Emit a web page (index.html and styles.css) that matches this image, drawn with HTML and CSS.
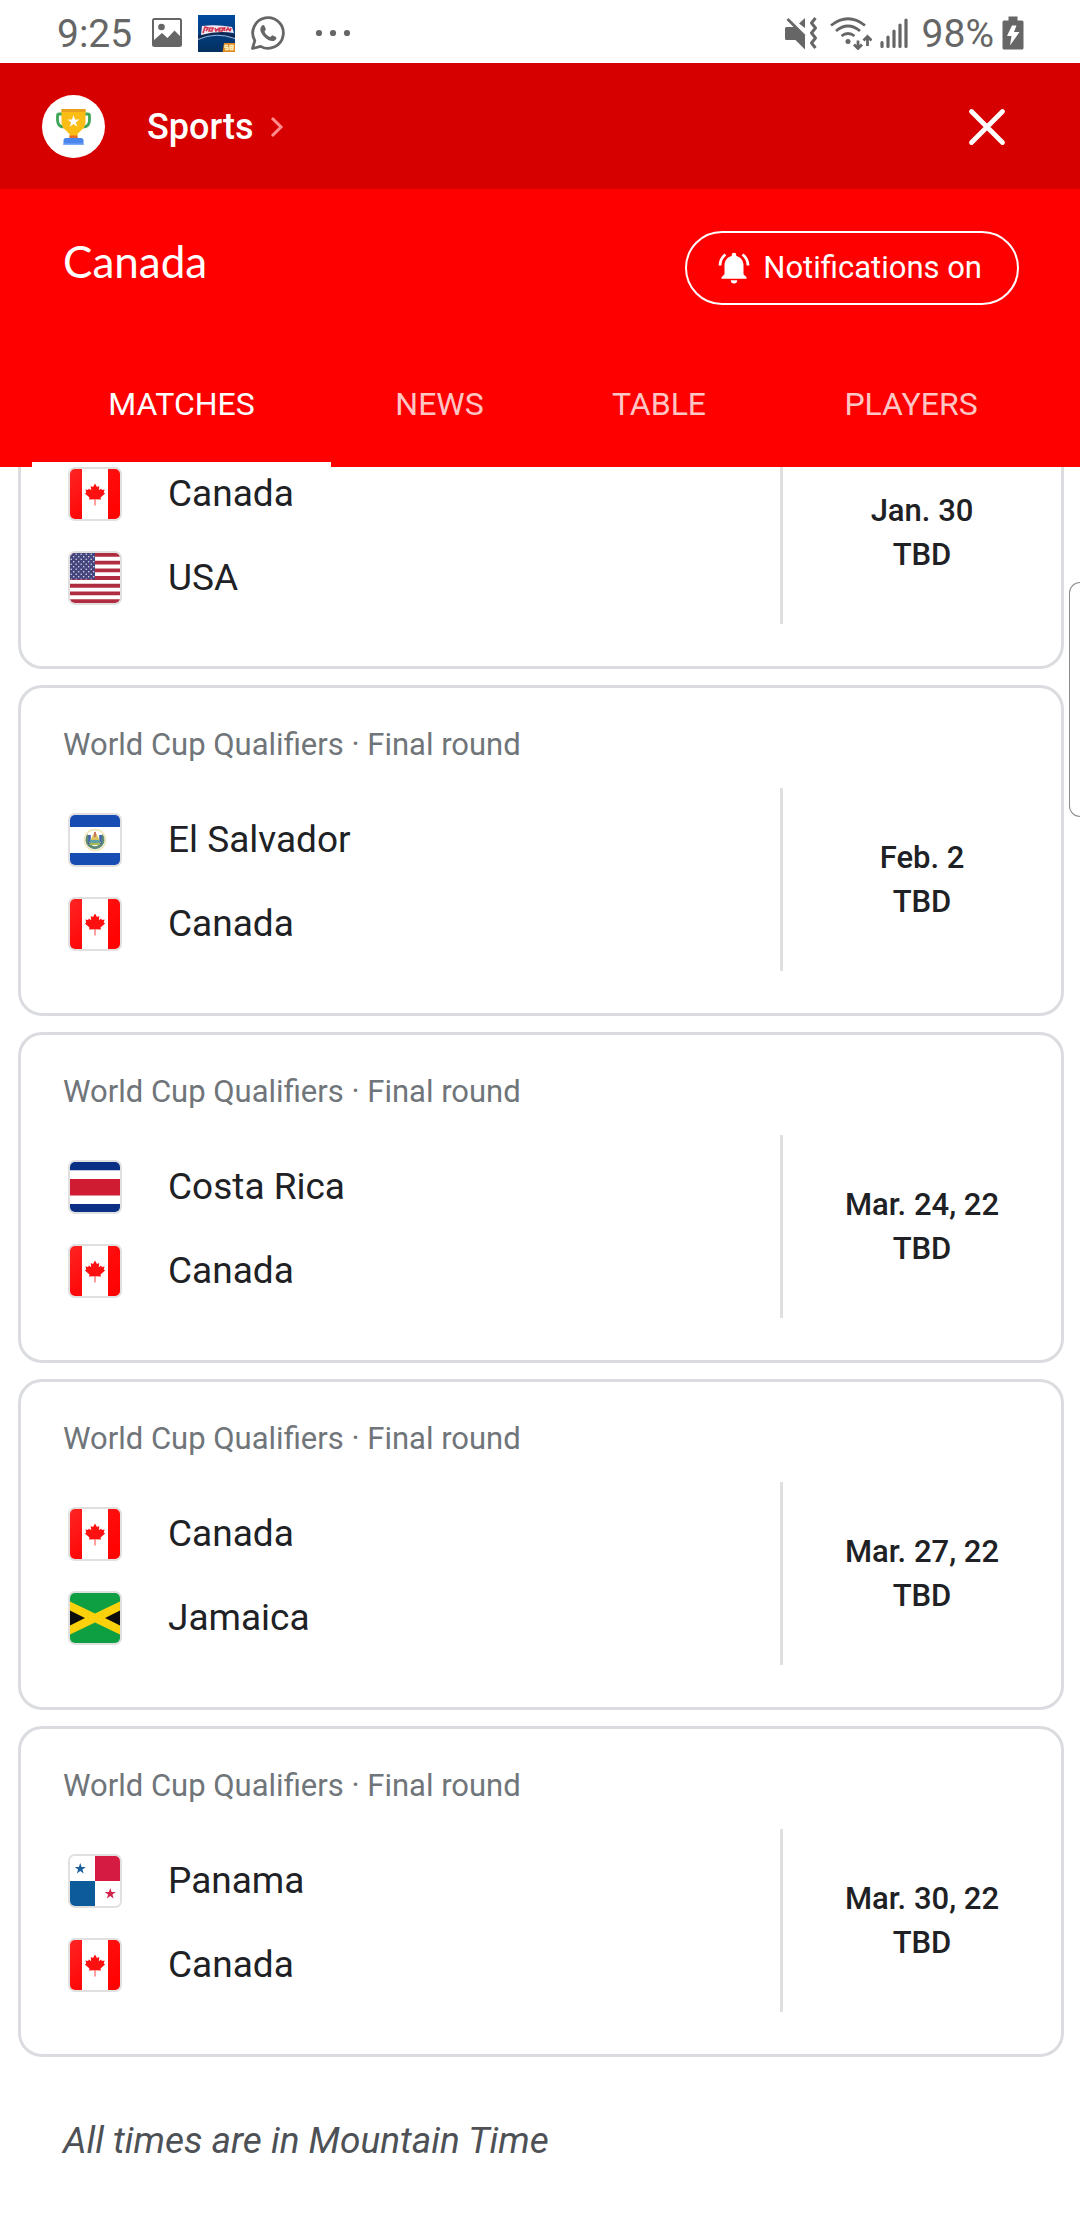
FILE: index.html
```html
<!DOCTYPE html>
<html lang="en">
<head>
<meta charset="utf-8">
<meta name="viewport" content="width=device-width, initial-scale=1">
<title>Canada - Sports</title>
<link rel="stylesheet" href="styles.css">
</head>
<body>
<svg class="sprite" aria-hidden="true">
  <defs>
    <linearGradient id="red" x1="0" y1="0" x2="1" y2="1"><stop offset="0" stop-color="#ff2424"/><stop offset=".5" stop-color="#ff0b0b"/><stop offset="1" stop-color="#ff0000"/></linearGradient>
    <symbol id="star" viewBox="-7 -7 14 14"><path d="M0-6.5 1.5-2h4.7L2.4.8 3.8 5.3 0 2.5-3.8 5.3-2.4.8-6.2-2h4.7z"/></symbol>
    <pattern id="stars" width="5" height="5" patternUnits="userSpaceOnUse"><rect width="5" height="5" fill="#46467f"/><circle cx="1.2" cy="1.3" r=".75" fill="#e4e4f0"/><circle cx="3.7" cy="3.8" r=".75" fill="#e4e4f0"/></pattern>
    <symbol id="flag-canada" viewBox="0 0 50 50">
      <path fill="#fff" d="M0 0h50v50H0z"/>
      <path fill="url(#red)" d="M0 0h12v50H0zM38 0h12v50H38z"/>
      <path fill="#ff1010" d="M25 14.500l2 3.600 2.300-1.100-.5 4.200 2.300-1.700.8 1.600 2.700-.5-.9 3 1.400.9-4.600 3.900.5 2.100-5.600-.2v6.200h-.8v-6.200l-5.600.2.500-2.100-4.600-3.900 1.400-.9-.9-3 2.700.5.800-1.600 2.300 1.700-.5-4.200 2.300 1.100z"/>
    </symbol>
    <symbol id="flag-usa" viewBox="0 0 50 50">
      <path fill="#fff" d="M0 0h50v50H0z"/>
      <path stroke="#b02c40" stroke-width="3.850" d="M0 1.920h50M0 9.620h50M0 17.300h50M0 25h50M0 32.700h50M0 40.400h50M0 48.100h50"/>
      <path fill="url(#stars)" d="M0 0h25v26.500H0z"/>
    </symbol>
    <symbol id="flag-el-salvador" viewBox="0 0 50 50">
      <path fill="#fff" d="M0 0h50v50H0z"/>
      <path fill="#174db3" d="M0 0h50v12H0zM0 38h50v12H0z"/>
      <circle cx="25" cy="25" r="10.500" fill="none" stroke="#efe6b8" stroke-width="1.500"/>
      <path fill="none" stroke="#5f8a74" stroke-width="3" d="M18.500 20a8 8 0 1 0 13 0"/>
      <path fill="none" stroke="#3c5fa8" stroke-width="2.500" d="M19.500 20v9M30.500 20v9"/>
      <path fill="#d9c45c" d="M25 16l6 12H19z"/>
      <path fill="#5fa2a5" d="M20 25h10v3H20z"/>
      <path fill="#a9bb52" d="M20 28h10v2H20z"/>
      <path fill="#c9785e" d="M24 17h2v5h-2z"/>
    </symbol>
    <symbol id="flag-costa-rica" viewBox="0 0 50 50">
      <path fill="#fff" d="M0 0h50v50H0z"/>
      <path fill="#0a3085" d="M0 0h50v8.300H0zM0 42h50v8H0z"/>
      <path fill="#d01c33" d="M0 17h50v16.500H0z"/>
    </symbol>
    <symbol id="flag-jamaica" viewBox="0 0 50 50">
      <path fill="#0f9f43" d="M0 0h50v50H0z"/>
      <path fill="#fdd20c" d="M0 8.500l25 12 25-12v33l-25-12-25 12z"/>
      <path fill="#0c0c0c" d="M0 17.500L15 25 0 32.500zM50 17.500L35 25l15 7.500z"/>
    </symbol>
    <symbol id="flag-panama" viewBox="0 0 50 50">
      <path fill="#fff" d="M0 0h50v50H0z"/>
      <path fill="#d51b42" d="M25 0h25v25H25z"/>
      <path fill="#0d5b9b" d="M0 25h25v25H0z"/>
      <use href="#star" x="4" y="6.500" width="12.500" height="12.500" fill="#1a5f9c"/>
      <use href="#star" x="34" y="31.500" width="12.500" height="12.500" fill="#d3234a"/>
    </symbol>
  </defs>
</svg>

<div class="status">
  <div class="status-group">
    <span class="status-text">9:25</span>
    <svg class="status-icon" width="32" height="32" viewBox="0 0 32 32"><path fill="#666" fill-rule="evenodd" d="M3.500 1h25A2.500 2.500 0 0 1 31 3.500v24a2.500 2.500 0 0 1-2.500 2.500h-25A2.500 2.500 0 0 1 1 27.500v-24A2.500 2.500 0 0 1 3.500 1zM3 3v20l8-7 5.500 5 7-7.500L29 19V3z"/><circle cx="10.500" cy="10" r="3.300" fill="#666"/></svg>
    <svg class="status-icon" width="37" height="37" viewBox="0 0 37 37"><defs><linearGradient id="app" x2="0" y2="1"><stop stop-color="#004a9f"/><stop offset="1" stop-color="#04305f"/></linearGradient></defs><path fill="url(#app)" d="M0 0h37v37H0z"/><path fill="#10264f" d="M0 21q18-8 37-1v3q-18-8-37 1z"/><path fill="none" stroke="#9fb6d8" d="M0 24.500q18-8 37-1"/><path fill="#f1e9f2" d="M4 11q14-2 30 1l2 6q-16-3-33 2z"/><path fill="none" stroke="#d23a55" stroke-width="1.700" d="M5 18l2-6 3 1-2 3M11 16l1-3h3l-1 3zM17 13l1 3 3-3M22 13l-1 3h3l1-3zM26 16l1-4M28 16l2-3 2 3M32 16l1-3"/><path fill="#e08b23" d="M26 28h11v9H24.500z"/><path fill="none" stroke="#fff2c0" stroke-width="1.300" d="M30 30.500h-3v2h3v2h-3M35 30.500h-3v4h3zM32 32.500h3"/></svg>
    <svg class="status-icon" width="36" height="36" viewBox="0 0 36 36"><path fill="none" stroke="#666" stroke-width="2.800" stroke-linejoin="round" d="M2.500 33.500l2.300-7.800A15.300 15.300 0 1 1 10.600 31.400z"/><path fill="#666" d="M12.500 10.200c.8-.5 1.700-.1 2 .7l1.300 3.200c.2.700-1.300 2.200-1.300 2.700.9 2.300 3.400 4.500 5.600 5.300.6 0 1.700-1.900 2.400-1.800l3.500 1.600c.9.500.2 2.800-1.300 3.600-3.100 1.700-8-.9-10.800-4-3.400-3.800-5.300-8.500-1.400-11.300z"/></svg>
    <svg class="status-icon status-more" width="36" height="8" viewBox="0 0 36 8"><g fill="#666"><circle cx="4" cy="4" r="3.100"/><circle cx="18" cy="4" r="3.100"/><circle cx="32" cy="4" r="3.100"/></g></svg>
  </div>
  <div class="status-group status-system">
    <svg class="status-icon" width="37" height="34" viewBox="0 0 37 34"><g fill="#666"><path d="M1.500 11H9l11 9v13.500L10.500 24h-9A1.500 1.500 0 0 1 0 22.500v-10A1.500 1.500 0 0 1 1.500 11zM14 7.500L20 2v10z"/></g><path stroke="#666" stroke-width="2.800" d="M2.500 3l17 17"/><path fill="none" stroke="#666" stroke-width="3" stroke-linejoin="round" d="M30.500 2l-4 5 4 5-4 5 4 5-4 5 4 5"/></svg>
    <svg class="status-icon" width="42" height="34" viewBox="0 0 42 34"><g fill="none" stroke="#666" stroke-width="2.800"><path d="M1 9.500q17-13.500 34 0M6 15q12-10 24 0M11.500 20q6.500-5 13 0"/><path d="M28 24.500V32M24 28.500l4 4 4-4M37.500 30v-9.500M33.500 24.500l4-4 4 4"/></g><circle cx="18" cy="25.500" r="2.500" fill="#666"/></svg>
    <svg class="status-icon" width="28" height="32" viewBox="0 0 28 32"><path stroke="#666" stroke-width="3.200" stroke-linecap="round" d="M2 25.500v4M8 20v9.500M14 14v15.500M20 8v21.500M26 3v26.500"/></svg>
    <span class="status-text status-battery">98%</span>
    <svg class="status-icon" width="22" height="34" viewBox="0 0 22 34"><path fill="#666" fill-rule="evenodd" d="M6.500.5h9v4H20a1.500 1.500 0 0 1 1.500 1.500v26a1.500 1.500 0 0 1-1.500 1.500H2A1.500 1.500 0 0 1 .5 32V6A1.500 1.500 0 0 1 2 4.500h4.500zM10 9.500L5 20h4.500L8 29.500 17.500 16H12l2.500-6.500z"/></svg>
  </div>
</div>

<header class="topbar">
  <a class="brand" href="#sports">
    <svg width="63" height="63" viewBox="0 0 63 63" aria-hidden="true"><circle cx="31.500" cy="31.500" r="31.500" fill="#fff"/><path fill="none" stroke="#3fa557" stroke-width="2.800" d="M20.500 19h-3q-2 0-2 2v4q0 6.500 6 7M42.500 19h3q2 0 2 2v4q0 6.500-6 7"/><path fill="#fbbc15" d="M19.500 14h24v13q0 5-4 8l-4 4v4h-8v-4l-4-4q-4-3-4-8z"/><path fill="#e9a01f" d="M19.500 14h24v3h-24z"/><path fill="#e86a2c" d="M27.500 40.500h8V43h-8z"/><path fill="#4a86ee" d="M24 43h15q2.500 0 2.500 2.500V50h-20v-4.500Q21.500 43 24 43z"/><path fill="#79a8f7" d="M21.500 48.500h20V50h-20z"/><use href="#star" x="24.500" y="19.500" width="14" height="14" fill="#fff"/></svg>
    <span class="brand-name">Sports</span>
    <svg width="14" height="22" viewBox="0 0 14 22" aria-hidden="true"><path fill="none" stroke="#ff8d8d" stroke-width="3" d="M2 2l9 9-9 9"/></svg>
  </a>
  <button class="close" type="button" aria-label="Close"><svg width="38" height="38" viewBox="0 0 38 38"><path stroke="#fff" stroke-width="4.800" stroke-linecap="round" d="M3.500 3.500l31 31M34.500 3.500l-31 31"/></svg></button>
</header>

<section class="hero">
  <div class="hero-row">
    <h1 class="team-title">Canada</h1>
    <button class="notify" type="button">
      <svg width="32" height="32" viewBox="0 0 32 32" aria-hidden="true"><path fill="#fff" d="M16 .8a2.300 2.300 0 0 1 2.300 2.300v.9c4.300 1 7.200 4.500 7.200 9.300v8.900l3 3v1.500h-25v-1.500l3-3v-8.900c0-4.800 2.900-8.300 7.200-9.300v-.9A2.300 2.300 0 0 1 16 .8zM12.800 28.200h6.400a3.200 3.200 0 0 1-6.400 0z"/><path fill="none" stroke="#fff" stroke-width="2.800" d="M2 13.500Q2.200 6.500 7.500 2.500M30 13.500q-.2-7-5.500-11"/></svg>
      <span>Notifications on</span>
    </button>
  </div>
  <nav class="tabs">
    <a class="tab tab-active" href="#matches" aria-current="page">MATCHES</a>
    <a class="tab" href="#news">NEWS</a>
    <a class="tab" href="#table">TABLE</a>
    <a class="tab" href="#players">PLAYERS</a>
  </nav>
</section>

<main class="matches">
  <article class="match match-clipped">
    <div class="match-body">
      <div class="teams">
        <div class="team"><svg class="flag"><use href="#flag-canada"/></svg><span>Canada</span></div>
        <div class="team"><svg class="flag"><use href="#flag-usa"/></svg><span>USA</span></div>
      </div>
      <div class="when"><span>Jan. 30</span><span>TBD</span></div>
    </div>
  </article>
  <article class="match">
    <h2 class="league">World Cup Qualifiers · Final round</h2>
    <div class="match-body">
      <div class="teams">
        <div class="team"><svg class="flag"><use href="#flag-el-salvador"/></svg><span>El Salvador</span></div>
        <div class="team"><svg class="flag"><use href="#flag-canada"/></svg><span>Canada</span></div>
      </div>
      <div class="when"><span>Feb. 2</span><span>TBD</span></div>
    </div>
  </article>
  <article class="match">
    <h2 class="league">World Cup Qualifiers · Final round</h2>
    <div class="match-body">
      <div class="teams">
        <div class="team"><svg class="flag"><use href="#flag-costa-rica"/></svg><span>Costa Rica</span></div>
        <div class="team"><svg class="flag"><use href="#flag-canada"/></svg><span>Canada</span></div>
      </div>
      <div class="when"><span>Mar. 24, 22</span><span>TBD</span></div>
    </div>
  </article>
  <article class="match">
    <h2 class="league">World Cup Qualifiers · Final round</h2>
    <div class="match-body">
      <div class="teams">
        <div class="team"><svg class="flag"><use href="#flag-canada"/></svg><span>Canada</span></div>
        <div class="team"><svg class="flag"><use href="#flag-jamaica"/></svg><span>Jamaica</span></div>
      </div>
      <div class="when"><span>Mar. 27, 22</span><span>TBD</span></div>
    </div>
  </article>
  <article class="match">
    <h2 class="league">World Cup Qualifiers · Final round</h2>
    <div class="match-body">
      <div class="teams">
        <div class="team"><svg class="flag"><use href="#flag-panama"/></svg><span>Panama</span></div>
        <div class="team"><svg class="flag"><use href="#flag-canada"/></svg><span>Canada</span></div>
      </div>
      <div class="when"><span>Mar. 30, 22</span><span>TBD</span></div>
    </div>
  </article>
</main>
<p class="timezone">All times are in Mountain Time</p>
<div class="edge-handle"></div>
</body>
</html>
```
FILE: styles.css
```css
* { box-sizing: border-box; }

body {
  position: relative;
  margin: 0;
  background: #fff;
  color: #202124;
  font-family: Roboto, "Liberation Sans", sans-serif;
}

svg { display: block; flex: none; }
a { color: inherit; text-decoration: none; }
button { padding: 0; border: 0; background: none; color: inherit; font: inherit; }

.sprite { position: absolute; width: 0; height: 0; }

/* Status bar */
.status {
  display: flex;
  justify-content: space-between;
  height: 63px;
  padding: 0 56px 0 57px;
  color: #666;
}
.status-group { display: flex; align-items: center; gap: 15px; padding-top: 3px; }
.status-system { gap: 8px; }
.status-text { margin-right: 4px; padding-top: 2px; font-size: 39px; line-height: 46px; }
.status-battery { margin: 0 0 0 6px; }
.status-more { margin-left: 14px; }

/* Title bar */
.topbar {
  display: flex;
  align-items: center;
  justify-content: space-between;
  padding: 32px 74px 31px 42px;
  background: #d60000;
  color: #fff;
}
.brand { display: flex; align-items: center; }
.brand-name { margin: 0 16px 0 42px; font-size: 36px; font-weight: 500; line-height: 42px; }
.close { cursor: pointer; }

/* Team header */
.hero { background: #f00; color: #fff; }
.hero-row {
  display: flex;
  align-items: flex-start;
  justify-content: space-between;
  padding: 42px 61px 0 63px;
}
.team-title {
  margin: 4px 0 0;
  font-family: Lato, Roboto, sans-serif;
  font-size: 44px;
  font-weight: 400;
  line-height: 52px;
}
.notify {
  display: flex;
  align-items: center;
  gap: 13px;
  height: 74px;
  padding: 0 35px 0 31px;
  border: 2px solid #fff;
  border-radius: 37px;
  font-size: 31px;
  line-height: 36px;
  cursor: pointer;
}
.tabs {
  display: grid;
  grid-template-columns: 299fr 217fr 222fr 282fr;
  margin-top: 46px;
  padding: 0 28px 0 32px;
}
.tab {
  padding: 35px 0 40px;
  border-bottom: 5px solid transparent;
  color: #ffc4c4;
  font-size: 32px;
  line-height: 36px;
  text-align: center;
}
.tab-active { border-color: #fff; color: #fff; }

/* Match cards */
.matches { display: grid; gap: 16px; padding: 0 16px 0 18px; }
.match {
  padding: 35px 0 42px;
  border: 3px solid #dadce0;
  border-radius: 24px;
}
.match-clipped { padding-top: 0; border-top: 0; border-radius: 0 0 24px 24px; }
.league {
  margin: 0 0 21px;
  padding: 0 42px;
  color: #70757a;
  font-size: 31px;
  font-weight: 400;
  line-height: 44px;
}
.match-body { display: grid; grid-template-columns: 1fr 281px; }
.teams { display: grid; gap: 30px; padding: 25px 0 20px 47px; }
.match-clipped .teams { padding-top: 0; padding-bottom: 19px; }
.team { display: flex; align-items: center; gap: 46px; font-size: 37px; line-height: 54px; }
.flag {
  width: 54px;
  height: 54px;
  border: 2px solid #e0e0e0;
  border-radius: 7px;
}
.when {
  display: flex;
  flex-direction: column;
  justify-content: center;
  border-left: 3px solid #e0e0e0;
  font-size: 31px;
  font-weight: 500;
  line-height: 44px;
  text-align: center;
}
.match-clipped .when { justify-content: flex-end; padding-bottom: 47px; }

.timezone {
  margin: 58px 0 0;
  padding: 0 63px 40px;
  color: #4d5156;
  font-size: 37px;
  font-style: italic;
  line-height: 52px;
}

/* Edge panel tab resting over the right side of the screen */
.edge-handle {
  position: absolute;
  top: 582px;
  right: 0;
  width: 11px;
  height: 235px;
  border: 1px solid #8c8c8c;
  border-right: 0;
  border-radius: 12px 0 0 12px;
  background: #fff;
}
```
